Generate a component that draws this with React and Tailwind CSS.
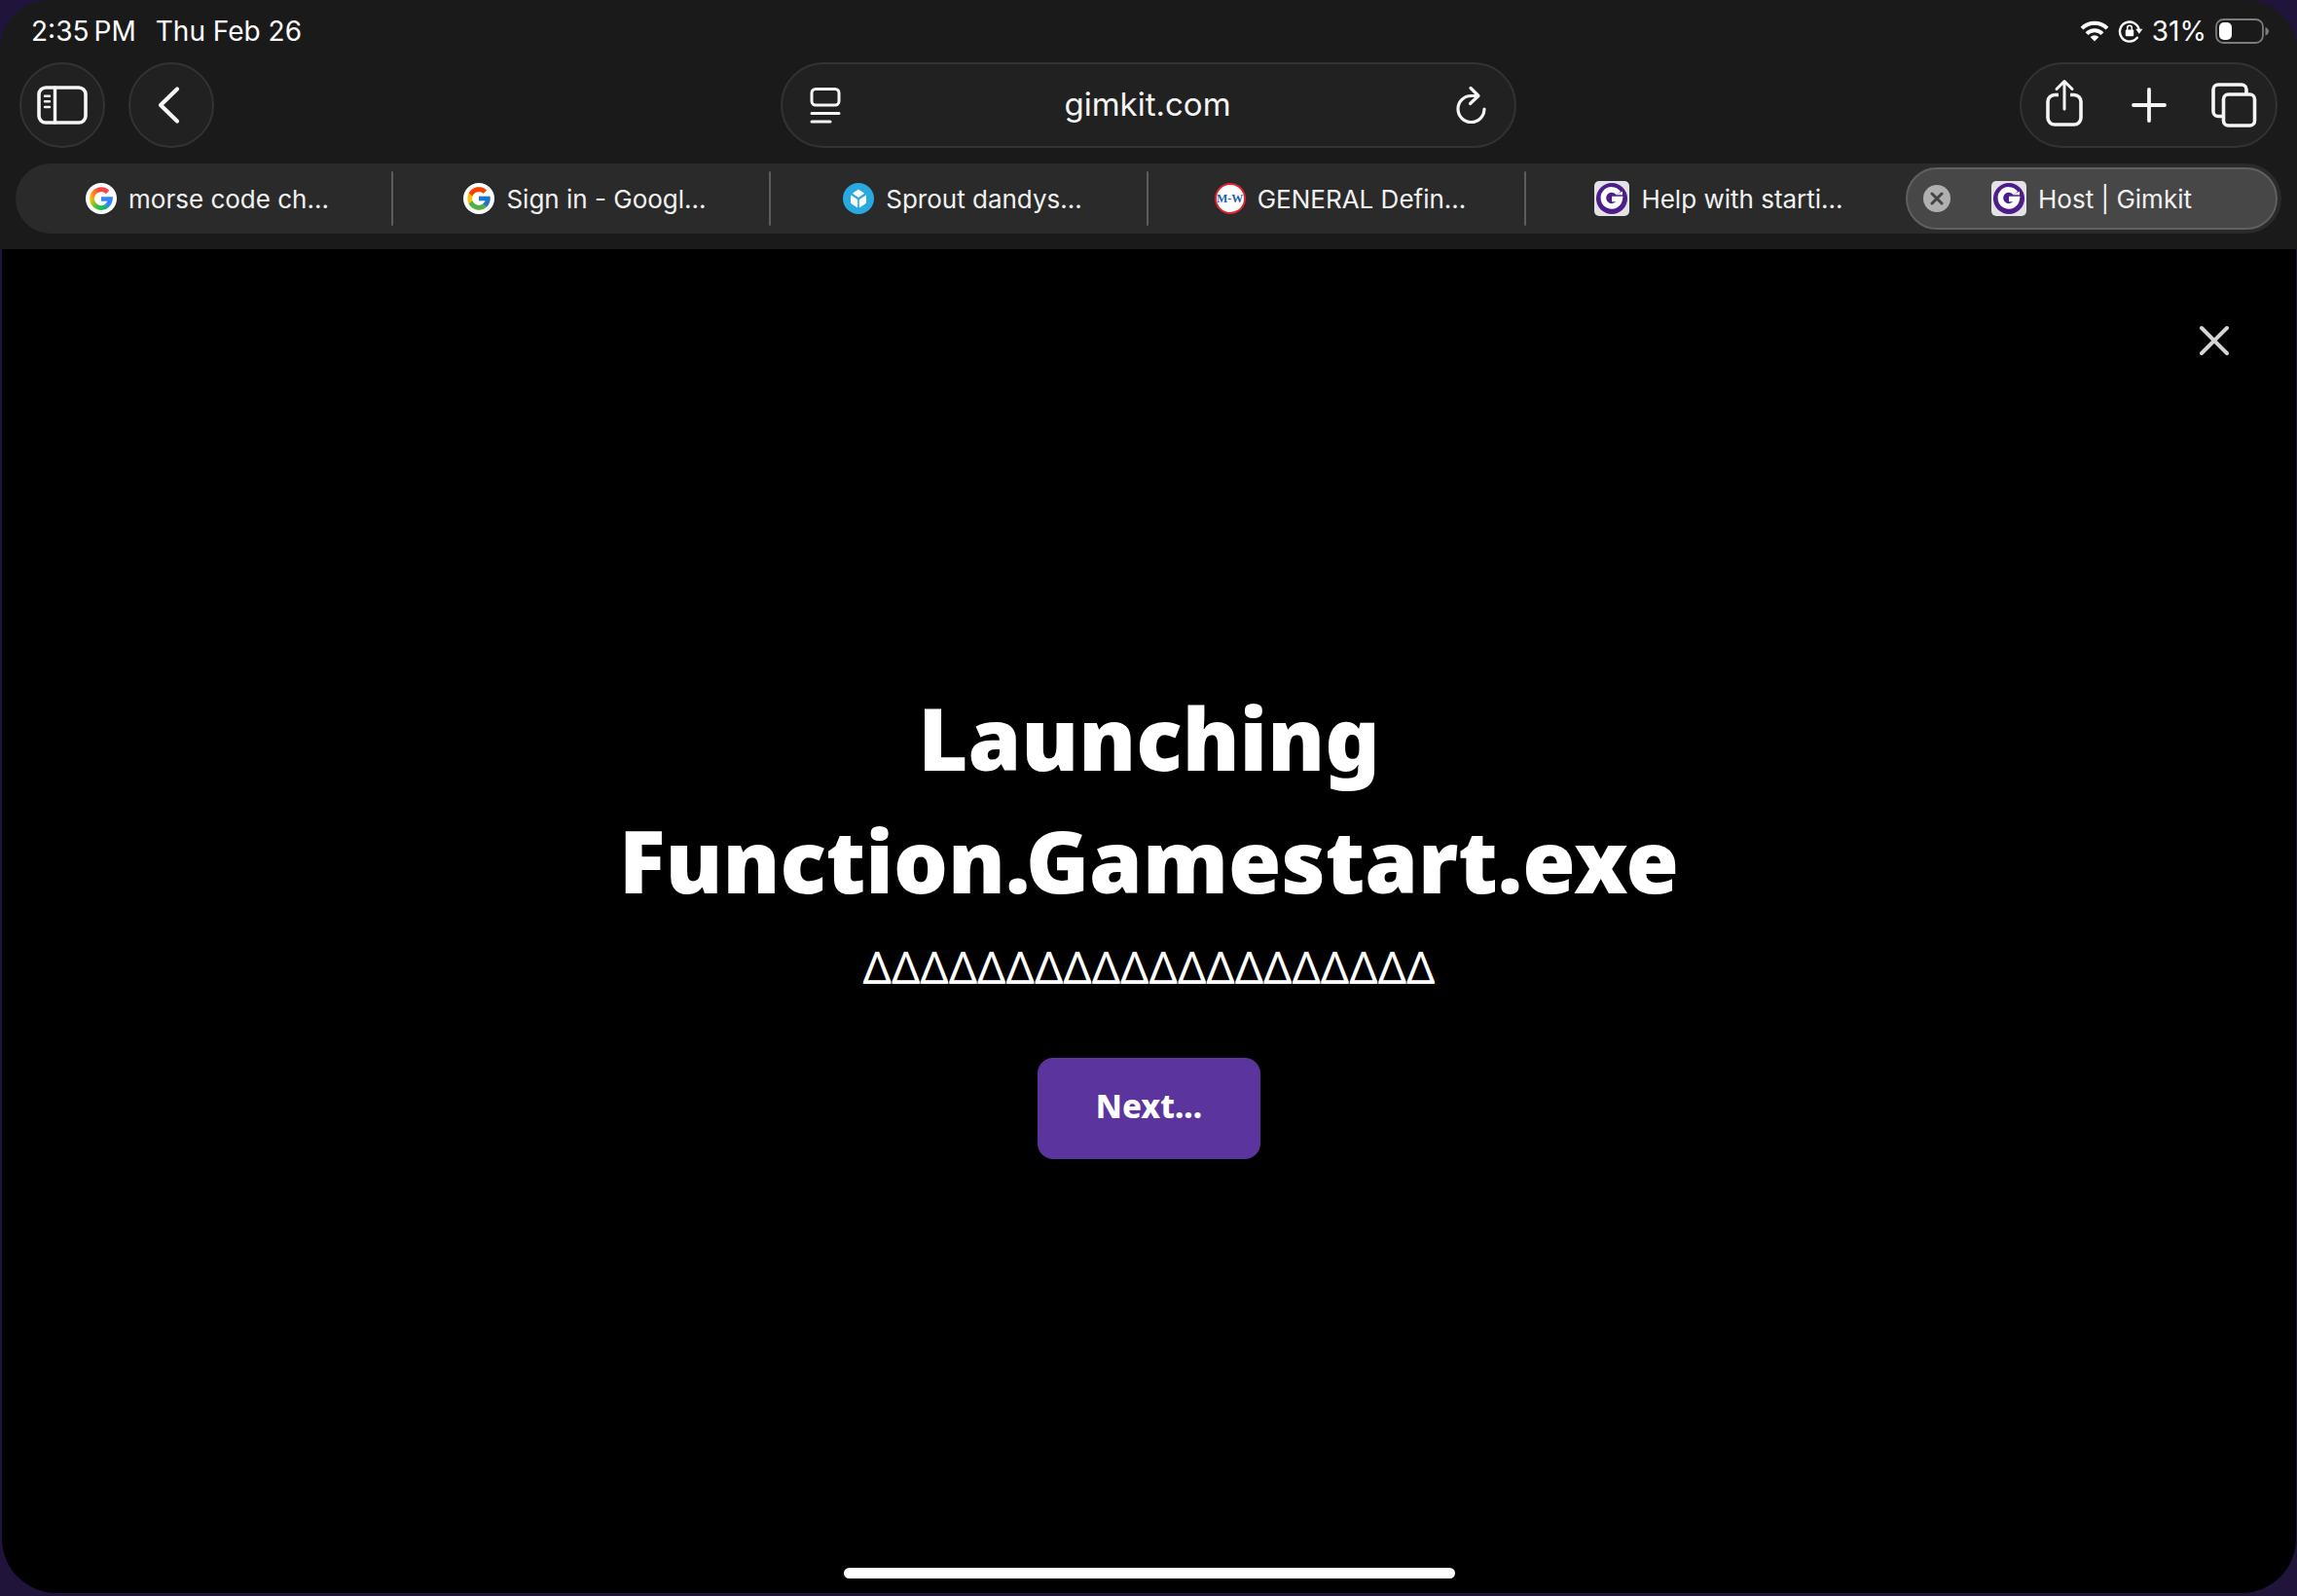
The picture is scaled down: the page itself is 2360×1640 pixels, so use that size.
import React from 'react';
import { FcGoogle } from 'react-icons/fc';

const SidebarIcon = () => (
    <svg width="52" height="40" viewBox="0 0 52 40" fill="none" stroke="currentColor" strokeLinecap="round">
        <rect x="2" y="2" width="48" height="36" rx="7" strokeWidth="3.6" />
        <path d="M18.5 2v36" strokeWidth="3.4" />
        <path d="M8 10.7h5M8 16.3h5M8 22h5" strokeWidth="2.4" />
    </svg>
);

const BackIcon = () => (
    <svg width="40" height="40" viewBox="0 0 40 40" fill="none" stroke="currentColor" strokeWidth="4.2" strokeLinecap="round" strokeLinejoin="round">
        <path d="M26 3.5 9 20l17 16.5" />
    </svg>
);

const ReaderIcon = () => (
    <svg width="32" height="38" viewBox="0 0 32 38" fill="none" stroke="currentColor" strokeWidth="3" strokeLinecap="round">
        <rect x="2" y="2.5" width="28" height="16.5" rx="4" />
        <path d="M2 27.5h28M2 36h19" />
    </svg>
);

const ReloadIcon = () => (
    <svg width="34" height="40" viewBox="0 0 34 40" fill="none" stroke="currentColor" strokeWidth="3.2" strokeLinecap="round" strokeLinejoin="round">
        <path d="M24 10.5h-6.5A13.5 13.5 0 1 0 31 24" />
        <path d="m17 2.5 8 8-8.5 8" />
    </svg>
);

const ShareIcon = () => (
    <svg width="40" height="50" viewBox="0 0 40 50" fill="none" stroke="currentColor" strokeWidth="3.6" strokeLinecap="round" strokeLinejoin="round">
        <path strokeLinecap="butt" d="M14 16.5H10a7 7 0 0 0-7 7V40a7 7 0 0 0 7 7h20a7 7 0 0 0 7-7V23.5a7 7 0 0 0-7-7h-4" />
        <path strokeWidth="3" d="M20 31V2.5M12 10.5l8-8 8 8" />
    </svg>
);

const PlusIcon = () => (
    <svg width="36" height="36" viewBox="0 0 36 36" fill="none" stroke="currentColor" strokeWidth="3.8" strokeLinecap="round">
        <path d="M18 2v32M2 18h32" />
    </svg>
);

const TabsIcon = () => (
    <svg width="48" height="46" viewBox="0 0 48 46" fill="none" stroke="currentColor" strokeWidth="3.6">
        <path d="M13.5 34.5H8a5 5 0 0 1-5-5V7a5 5 0 0 1 5-5h24a5 5 0 0 1 5 5v5" />
        <rect x="13.5" y="12" width="32" height="32" rx="5" />
    </svg>
);

const WifiIcon = () => (
    <svg width="30" height="22" viewBox="0 0 30 22" fill="none" stroke="white" strokeWidth="4">
        <path d="M2 8.2a18.5 18.5 0 0 1 26 0" />
        <path d="M7 13.6a11.5 11.5 0 0 1 16 0" />
        <path d="M10.6 17a6.5 6.5 0 0 1 8.8 0L15 21.5z" fill="white" stroke="none" />
    </svg>
);

const LockIcon = () => (
    <svg width="26" height="24" viewBox="0 0 26 24" fill="none">
        <path d="M19.8 18.8a10 10 0 1 1 2-8" stroke="white" strokeWidth="2.4" strokeLinecap="round" />
        <path d="M18.2 9.8h7.3l-3.7 5z" fill="white" />
        <rect x="7.8" y="10.5" width="8.4" height="6.7" rx="1" fill="white" />
        <path d="M9.7 11V8.6a2.3 2.3 0 0 1 4.6 0V11" stroke="white" strokeWidth="1.5" />
    </svg>
);

const BatteryIcon = () => (
    <svg width="56" height="26" viewBox="0 0 56 26" fill="none">
        <rect x="1" y="1" width="48" height="24" rx="7.5" stroke="#7c7c7c" strokeWidth="1.8" />
        <rect x="4" y="4" width="13" height="18" rx="5" fill="white" />
        <path d="M51.5 9v8.5c2.4-.8 3.5-2.4 3.5-4.2S53.9 9.8 51.5 9z" fill="#7c7c7c" />
    </svg>
);

const GoogleFavicon = () => (
    <span className="flex size-8 items-center justify-center rounded-full bg-white">
        <FcGoogle size={28} />
    </span>
);

const GoogleGradientFavicon = () => (
    <svg width="32" height="32" viewBox="0 0 32 32" fill="none">
        <defs>
            <linearGradient id="g-top" x1="5" y1="14" x2="24" y2="8" gradientUnits="userSpaceOnUse">
                <stop offset="0" stopColor="#ffb000" />
                <stop offset="0.5" stopColor="#ff4641" />
                <stop offset="1" stopColor="#fb3f49" />
            </linearGradient>
            <linearGradient id="g-bottom" x1="5" y1="15" x2="25" y2="24" gradientUnits="userSpaceOnUse">
                <stop offset="0" stopColor="#ffc400" />
                <stop offset="0.45" stopColor="#3fbf3c" />
                <stop offset="0.8" stopColor="#0ebc5f" />
                <stop offset="1" stopColor="#3186ff" />
            </linearGradient>
        </defs>
        <circle cx="16" cy="16" r="16" fill="white" />
        <path d="M22.6 9.4A9.5 9.5 0 0 0 6.5 16" stroke="url(#g-top)" strokeWidth="4.8" />
        <path d="M6.5 15.8A9.5 9.5 0 0 0 22.5 22.9" stroke="url(#g-bottom)" strokeWidth="4.8" />
        <path d="M16 16.5h9.5a9.5 9.5 0 0 1-3.8 6.8" stroke="#3186ff" strokeWidth="4.6" />
    </svg>
);

const CubeFavicon = () => (
    <svg width="32" height="32" viewBox="0 0 32 32">
        <circle cx="16" cy="16" r="16" fill="#29a9e0" />
        <g fill="white" stroke="white" strokeWidth="1" strokeLinejoin="round">
            <path d="m16 7 5.5 3.7-5.5 3.8-5.5-3.8z" />
            <path d="m8.5 13.2 6.2 4v7.6l-6.2-4.1z" />
            <path d="m23.5 13.2-6.2 4v7.6l6.2-4.1z" />
        </g>
    </svg>
);

const WebsterFavicon = () => (
    <span className="flex size-8 items-center justify-center rounded-full border-2 border-[#e0242f] bg-white font-['Liberation_Serif',serif] text-[12px] font-bold whitespace-nowrap text-[#1f5fa8]">
        M-W
    </span>
);

const GimkitFavicon = () => (
    <svg width="36" height="36" viewBox="0 0 36 36" fill="none">
        <rect width="36" height="36" rx="5" fill="#e3e3e3" />
        <circle cx="18" cy="18" r="16" fill="#4f1c8c" />
        <path d="M24.8 12.5A8.5 8.5 0 1 0 26.3 18.5H18" stroke="white" strokeWidth="5.6" />
        <path d="M22 14.2h7V10.5z" fill="white" />
    </svg>
);

const tabs = [
    { title: 'morse code ch...', icon: GoogleGradientFavicon },
    { title: 'Sign in - Googl...', icon: GoogleFavicon },
    { title: 'Sprout dandys...', icon: CubeFavicon },
    { title: 'GENERAL Defin...', icon: WebsterFavicon },
    { title: 'Help with starti...', icon: GimkitFavicon },
];

const glass = 'border-2 border-[#333333] bg-[#212121]';

function StatusBar() {
    return (
        <div className="flex h-16 items-center justify-between pr-7 pl-8 text-[28px] text-white">
            <div className="flex gap-5">
                <span>2:35{'\u2009'}PM</span>
                <span>Thu Feb 26</span>
            </div>
            <div className="flex items-center gap-[9px]">
                <WifiIcon />
                <LockIcon />
                <span>31%</span>
                <BatteryIcon />
            </div>
        </div>
    );
}

function Toolbar() {
    return (
        <div className="grid grid-cols-[1fr_auto_1fr] items-center px-5 text-[#f5f5f5]">
            <div className="flex gap-6">
                <button aria-label="Show sidebar" className={`flex size-22 items-center justify-center rounded-full ${glass}`}>
                    <SidebarIcon />
                </button>
                <button aria-label="Back" className={`flex size-22 items-center justify-center rounded-full ${glass}`}>
                    <BackIcon />
                </button>
            </div>
            <div className={`flex h-22 w-[32vw] items-center rounded-full px-7 ${glass}`}>
                <button aria-label="Page menu">
                    <ReaderIcon />
                </button>
                <input
                    aria-label="Address"
                    defaultValue="gimkit.com"
                    className="min-w-0 flex-1 bg-transparent text-center text-[33px] outline-none"
                />
                <button aria-label="Reload">
                    <ReloadIcon />
                </button>
            </div>
            <div className={`flex h-22 items-center justify-self-end rounded-full ${glass}`}>
                <button aria-label="Share" className="flex w-[87px] justify-center pb-1">
                    <ShareIcon />
                </button>
                <button aria-label="New tab" className="flex w-[87px] justify-center">
                    <PlusIcon />
                </button>
                <button aria-label="All tabs" className="flex w-[87px] justify-center">
                    <TabsIcon />
                </button>
            </div>
        </div>
    );
}

function TabBar() {
    return (
        <nav className="mx-4 my-4 grid h-18 grid-cols-6 items-center rounded-full bg-[#2a2a2a] text-[26px] text-[#f2f2f2]">
            {tabs.map(({ title, icon: Icon }, i) => (
                <div key={title} className="flex items-center">
                    <button className="flex flex-1 items-center justify-center gap-3 pl-2">
                        <Icon />
                        <span>{title}</span>
                    </button>
                    {i < tabs.length - 1 && <span className="h-14 w-[2px] rounded-full bg-[#5c5c60]" />}
                </div>
            ))}
            <div className="relative mr-1 ml-[2px] flex h-16 items-center justify-center rounded-full border-2 border-[#606060] bg-[#474747]">
                <button aria-label="Close tab" className="absolute left-4 flex size-7 items-center justify-center rounded-full bg-[#b0b0b0]">
                    <svg width="14" height="14" viewBox="0 0 14 14" stroke="#454545" strokeWidth="3" strokeLinecap="round">
                        <path d="m2 2 10 10M12 2 2 12" />
                    </svg>
                </button>
                <button className="flex items-center gap-3">
                    <GimkitFavicon />
                    <span>Host | Gimkit</span>
                </button>
            </div>
        </nav>
    );
}

export default function App() {
    return (
        <div className="flex min-h-screen flex-col bg-[#20143a] font-['Inter',sans-serif]">
            <header className="rounded-t-[52px] bg-[#1a1a1a]">
                <StatusBar />
                <Toolbar />
                <TabBar />
            </header>

            <main className="relative mr-px mb-[3px] ml-[2px] flex flex-1 flex-col items-center justify-center rounded-b-[56px] bg-black pb-2 text-white">
                <button aria-label="Close" className="absolute top-[78px] right-[68px]">
                    <svg width="32" height="32" viewBox="0 0 32 32" stroke="#d4d4d4" strokeWidth="4" strokeLinecap="round">
                        <path d="m3 3 26 26M29 3 3 29" />
                    </svg>
                </button>

                <h1 className="text-center font-['Noto_Sans',sans-serif] text-[88px] leading-[126px] font-black">
                    Launching
                    <br />
                    Function.Gamestart.exe
                </h1>
                <p className="mt-3 font-['Noto_Sans',sans-serif] text-[46px] leading-[68px]">ΔΔΔΔΔΔΔΔΔΔΔΔΔΔΔΔΔΔΔΔ</p>
                <button className="mt-15 h-[104px] rounded-2xl bg-[#5b349d] px-15 pb-1 font-['Noto_Sans',sans-serif] text-[33px] font-extrabold">
                    Next...
                </button>

                {/* home indicator */}
                <div className="absolute bottom-[15px] h-[11px] w-[628px] rounded-full bg-white" />
            </main>
        </div>
    );
}
